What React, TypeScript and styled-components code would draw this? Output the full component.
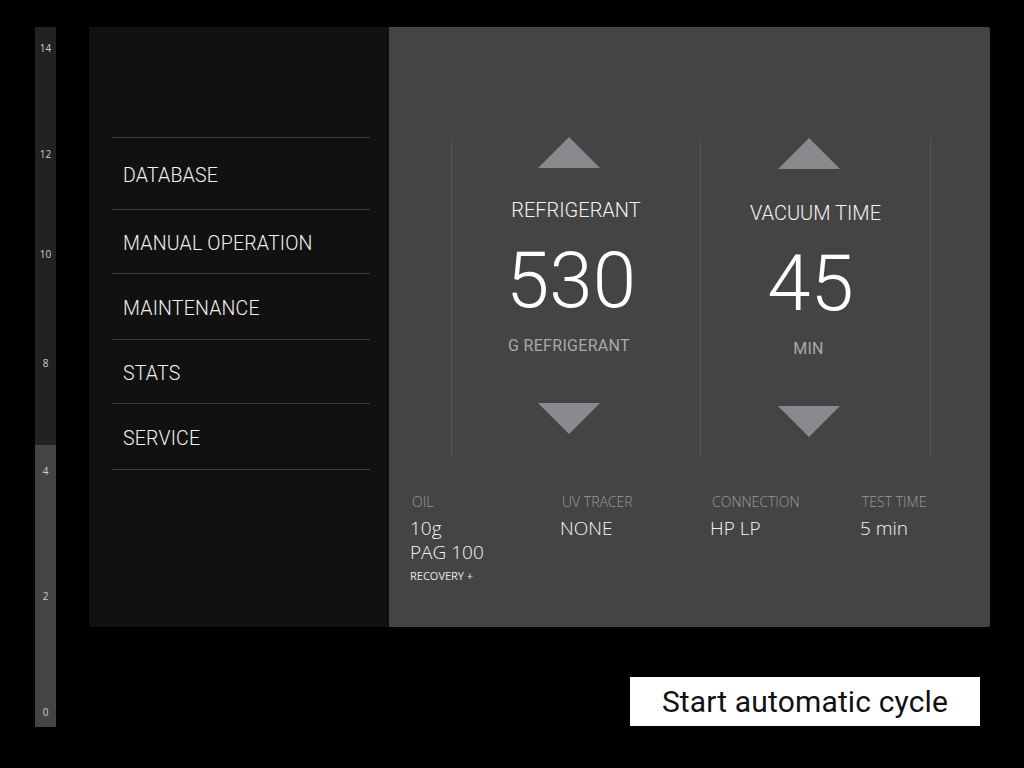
import React from 'react'
import styled, { createGlobalStyle } from 'styled-components'

const GlobalStyle = createGlobalStyle`
  html, body {
    margin: 0;
    padding: 0;
    background: #000;
    font-family: Roboto, "Liberation Sans", sans-serif;
  }
  * {
    box-sizing: border-box;
  }
`

const Page = styled.div`
  display: flex;
  gap: 33px;
  width: 1024px;
  height: 768px;
  padding: 27px 0 0 35px;
  background: #000;
`

const Gauge = styled.div`
  position: relative;
  flex-shrink: 0;
  width: 21px;
  height: 700px;
  background: #222;
`

const GaugeFill = styled.div`
  position: absolute;
  left: 0;
  right: 0;
  bottom: 0;
  background: #444;
`

const GaugeTick = styled.span`
  position: absolute;
  left: 0;
  right: 0;
  transform: translateY(-50%);
  text-align: center;
  font-family: "Open Sans", "DejaVu Sans", sans-serif;
  font-size: 10px;
  line-height: 12px;
  color: #cfcfcf;
`

const RightColumn = styled.div`
  display: flex;
  flex-direction: column;
  align-items: flex-end;
  flex-shrink: 0;
  width: 901px;
`

const Card = styled.div`
  display: flex;
  width: 901px;
  height: 600px;
  border-radius: 2px;
  overflow: hidden;
`

const Sidebar = styled.nav`
  flex: 0 0 300px;
  background: #111;
  padding: 110px 19px 0 23px;
`

const MenuItem = styled.div<{ $height: number }>`
  display: flex;
  align-items: center;
  height: ${({ $height }) => $height}px;
  padding: 3px 0 0 11px;
  border-bottom: 1px solid #3c3c3e;
  font-size: 19.5px;
  font-weight: 300;
  color: #f2f2f2;
  letter-spacing: 0.2px;

  &:first-child {
    border-top: 1px solid #3c3c3e;
  }
`

const MainPanel = styled.section`
  flex: 1;
  background: #444;
  padding-top: 110px;
`

const AdjusterRow = styled.div`
  display: flex;
  height: 321px;
  margin-left: 62px;
`

const Adjuster = styled.div<{ $width: number; $drop?: number }>`
  display: flex;
  flex-direction: column;
  align-items: center;
  width: ${({ $width }) => $width}px;
  border-left: 1px solid #535353;
  padding-top: ${({ $drop }) => $drop || 0}px;

  &:last-child {
    border-right: 1px solid #535353;
  }
`

const Arrow = styled.div<{ $down?: boolean }>`
  width: 0;
  height: 0;
  margin-right: 14px;
  border-left: 31px solid transparent;
  border-right: 31px solid transparent;
  ${({ $down }) =>
    $down
      ? 'border-top: 31px solid #8a8a8e; margin-top: 47px;'
      : 'border-bottom: 31px solid #8a8a8e;'}
`

const AdjusterTitle = styled.div<{ $drop?: number }>`
  margin-top: ${({ $drop }) => 30 + ($drop || 0)}px;
  font-size: 20px;
  font-weight: 300;
  line-height: 24px;
  color: #f2f2f2;
`

const AdjusterValue = styled.div`
  margin-top: 20px;
  margin-right: 10px;
  font-size: 78px;
  font-weight: 300;
  line-height: 78px;
  color: #fff;
`

const AdjusterUnit = styled.div`
  margin-top: 16px;
  margin-right: 14px;
  font-size: 16px;
  line-height: 20px;
  color: #a9a9a9;
  letter-spacing: 0.3px;
`

const InfoRow = styled.div`
  display: grid;
  grid-template-columns: repeat(4, 150px);
  margin: 35px 0 0 21px;
  font-family: "Open Sans", "Liberation Sans", sans-serif;
`

const InfoCell = styled.div`
  display: flex;
  flex-direction: column;
`

const InfoLabel = styled.div`
  padding-left: 2px;
  font-size: 14px;
  font-weight: 300;
  line-height: 18px;
  color: #9a9a9a;
`

const InfoValue = styled.div`
  margin-top: 5px;
  font-size: 19px;
  font-weight: 300;
  line-height: 24px;
  color: #f4f4f4;
`

const InfoNote = styled.div`
  margin-top: 5px;
  font-size: 11px;
  line-height: 14px;
  color: #e8e8e8;
`

const StartButton = styled.button`
  width: 350px;
  height: 49px;
  margin: 50px 10px 0 0;
  border: none;
  background: #fff;
  color: #111;
  font-family: Roboto, "Liberation Sans", sans-serif;
  font-size: 30px;
  letter-spacing: 0.15px;
  cursor: pointer;
`

const ticks = [
  { label: '14', top: 21 },
  { label: '12', top: 127 },
  { label: '10', top: 227 },
  { label: '8', top: 336 },
  { label: '4', top: 444 },
  { label: '2', top: 569 },
  { label: '0', top: 685 },
]

const menu = [
  { label: 'DATABASE', height: 73 },
  { label: 'MANUAL OPERATION', height: 64 },
  { label: 'MAINTENANCE', height: 66 },
  { label: 'STATS', height: 64 },
  { label: 'SERVICE', height: 66 },
]

const App: React.FC = () => {
  const level = 282

  return (
    <>
      <GlobalStyle />
      <Page>
        <Gauge>
          <GaugeFill style={{ height: level }} />
          {ticks.map(t => (
            <GaugeTick key={t.label} style={{ top: t.top }}>
              {t.label}
            </GaugeTick>
          ))}
        </Gauge>

        <RightColumn>
          <Card>
            <Sidebar>
              {menu.map(item => (
                <MenuItem key={item.label} $height={item.height}>
                  {item.label}
                </MenuItem>
              ))}
            </Sidebar>

            <MainPanel>
              <AdjusterRow>
                <Adjuster $width={249}>
                  <Arrow />
                  <AdjusterTitle>REFRIGERANT</AdjusterTitle>
                  <AdjusterValue>530</AdjusterValue>
                  <AdjusterUnit>G REFRIGERANT</AdjusterUnit>
                  <Arrow $down />
                </Adjuster>
                <Adjuster $width={231} $drop={1}>
                  <Arrow />
                  <AdjusterTitle $drop={2}>VACUUM TIME</AdjusterTitle>
                  <AdjusterValue>45</AdjusterValue>
                  <AdjusterUnit>MIN</AdjusterUnit>
                  <Arrow $down />
                </Adjuster>
              </AdjusterRow>

              <InfoRow>
                <InfoCell>
                  <InfoLabel>OIL</InfoLabel>
                  <InfoValue>
                    10g
                    <br />
                    PAG 100
                  </InfoValue>
                  <InfoNote>RECOVERY +</InfoNote>
                </InfoCell>
                <InfoCell>
                  <InfoLabel>UV TRACER</InfoLabel>
                  <InfoValue>NONE</InfoValue>
                </InfoCell>
                <InfoCell>
                  <InfoLabel>CONNECTION</InfoLabel>
                  <InfoValue>HP LP</InfoValue>
                </InfoCell>
                <InfoCell>
                  <InfoLabel>TEST TIME</InfoLabel>
                  <InfoValue>5 min</InfoValue>
                </InfoCell>
              </InfoRow>
            </MainPanel>
          </Card>

          <StartButton>Start automatic cycle</StartButton>
        </RightColumn>
      </Page>
    </>
  )
}

export default App
